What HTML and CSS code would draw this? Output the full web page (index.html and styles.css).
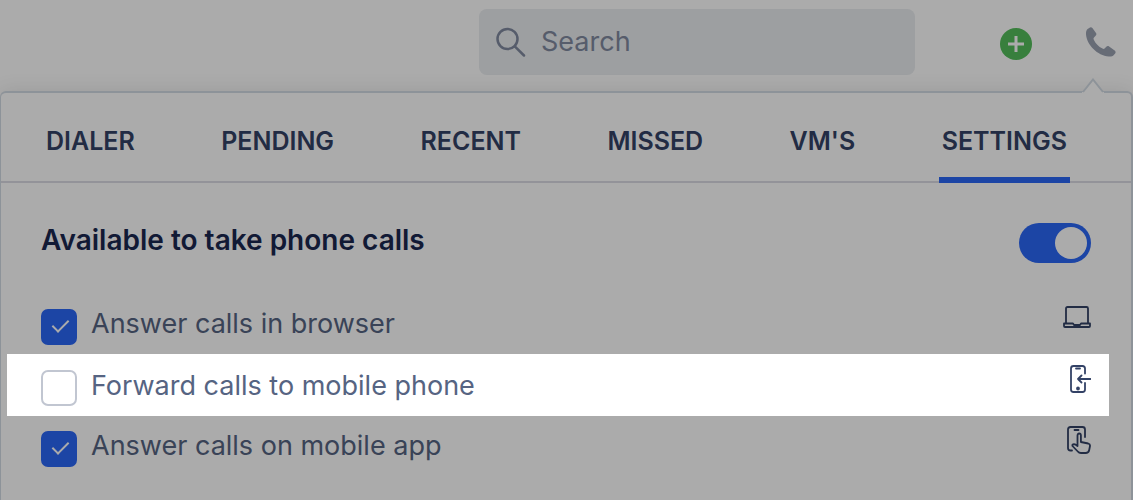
FILE: index.html
```html
<!DOCTYPE html>
<html lang="en">
<head>
    <meta charset="UTF-8">
    <meta name="viewport" content="width=device-width, initial-scale=1.0">
    <title>Phone Settings</title>
    <link rel="stylesheet" href="styles.css">
</head>
<body>
    <!-- Top bar -->
    <header class="topbar">
        <label class="search">
            <svg class="search-icon" viewBox="0 0 30 30" aria-hidden="true">
                <circle cx="11.5" cy="12" r="10"/>
                <path d="M18.8 19.300L28 28.500"/>
            </svg>
            <input type="search" class="search-input" placeholder="Search" aria-label="Search">
        </label>
        <button class="icon-btn add-btn" aria-label="Add">
            <svg viewBox="0 0 32 32" aria-hidden="true">
                <circle cx="16" cy="16" r="16"/>
                <path d="M16 8v16M8 16h16"/>
            </svg>
        </button>
        <button class="icon-btn phone-btn" aria-label="Phone">
            <svg viewBox="0 0 30 30" aria-hidden="true">
                <path d="M3.2.9C4.3.1 5.6.1 6.4 1.1L10 6c.7 1 .4 2-.4 2.8L7.800 10.700c-.4.500-.4 1.200 0 2 1.700 3.800 4.700 6.900 8.700 8.900.8.400 1.600.400 2.100-.2l1.700-1.700c.8-.8 1.900-.9 2.800-.2l5.600 4c1 .8 1.200 2 .4 3l-1.300 1.400c-1 1.100-2.800 1.700-5 1.500C11.500 28.600.8 18 0 7.200-.1 4.800.4 3 1.600 2z"/>
            </svg>
        </button>
    </header>

    <!-- Phone panel -->
    <main class="panel">
        <svg class="panel-arrow" viewBox="0 0 22 16" aria-hidden="true">
            <path d="M0 16V14H1L11 1.500 21 14h1v2z" class="arrow-fill"/>
            <path d="M1 14L11 1.500 21 14" class="arrow-line"/>
        </svg>

        <nav class="tabs">
            <button class="tab">DIALER</button>
            <button class="tab">PENDING</button>
            <button class="tab">RECENT</button>
            <button class="tab">MISSED</button>
            <button class="tab">VM'S</button>
            <button class="tab active">SETTINGS</button>
        </nav>

        <div class="available">
            <label class="available-label" for="available">Available to take phone calls</label>
            <input type="checkbox" class="toggle" id="available" role="switch" checked>
        </div>

        <div class="options">
            <div class="option">
                <input type="checkbox" class="check" id="browser" checked>
                <label class="option-label" for="browser">Answer calls in browser</label>
                <svg class="option-icon" viewBox="0 0 28 28" aria-hidden="true">
                    <path d="M3 19V4.500Q3 3 4.500 3h19Q25 3 25 4.500V19"/>
                    <path d="M1 19.500h9l1 1.500h6l1-1.500h9V22q0 1-1 1H2q-1 0-1-1z"/>
                </svg>
            </div>
            <div class="option highlighted">
                <input type="checkbox" class="check" id="forward">
                <label class="option-label" for="forward">Forward calls to mobile phone</label>
                <svg class="option-icon" viewBox="0 0 28 28" aria-hidden="true">
                    <path d="M22 8.500V3.500Q22 1 19.500 1h-9Q8 1 8 3.500v21Q8 27 10.500 27h9q2.500 0 2.500-2.500V18M13 3.500h4M27.500 14H15M18.500 10.500L15 14l3.500 3.500"/>
                    <circle cx="15" cy="23.500" r="1"/>
                </svg>
            </div>
            <div class="option">
                <input type="checkbox" class="check" id="app" checked>
                <label class="option-label" for="app">Answer calls on mobile app</label>
                <svg class="option-icon" viewBox="0 0 28 28" aria-hidden="true">
                    <path d="M9 24.500H7.500Q5 24.500 5 22V3.500Q5 1 7.500 1h12Q22 1 22 3.500V11M11.500 4h4"/>
                    <path d="M14.500 20V9.500q0-2 1.700-2t1.700 2V16l7.300 1.500q2 .5 1.800 2.500l-.8 4q-.6 3-3.600 3H18q-2 0-3.200-1.500L9.500 20q-.5-1.800 1.500-1.800 1.500.1 3.500 1.800"/>
                </svg>
            </div>
        </div>
    </main>
</body>
</html>
```

FILE: styles.css
```css
* {
    box-sizing: border-box;
}

body {
    margin: 0;
    min-height: 100vh;
    display: flex;
    flex-direction: column;
    overflow: hidden;
    background: white;
    font-family: Inter, "Liberation Sans", sans-serif;
    color: #566482;
}

button {
    padding: 0;
    border: none;
    background: none;
    font: inherit;
    cursor: pointer;
}

/* Top bar */
.topbar {
    display: flex;
    justify-content: flex-end;
    align-items: center;
    padding: 9px 17px 16px;
}

.search {
    flex: 0 1 436px;
    min-width: 0;
    height: 66px;
    display: flex;
    align-items: center;
    gap: 15px;
    padding: 0 17px;
    border-radius: 8px;
    background: #eaedf0;
}

.search-icon {
    flex: none;
    width: 30px;
    height: 30px;
    fill: none;
    stroke: #808aa0;
    stroke-width: 2.5;
    stroke-linecap: round;
}

.search-input {
    flex: 1;
    min-width: 0;
    padding: 0 0 2px;
    border: none;
    outline: none;
    background: none;
    font: inherit;
    font-size: 27px;
}

.search-input::placeholder {
    color: #808aa0;
}

.icon-btn svg {
    display: block;
    width: 100%;
}

.add-btn {
    width: 32px;
    margin: 4px 0 0 85px;
}

.add-btn circle {
    fill: #54be5b;
}

.add-btn path {
    stroke: white;
    stroke-width: 3;
}

.phone-btn {
    width: 30px;
    margin-left: 54px;
    fill: #9aa1b1;
}

/* Panel */
.panel {
    position: relative;
    flex: 1;
    border: 2px solid #d3dbe4;
    border-left-width: 1px;
    border-bottom: none;
    border-radius: 6px 6px 0 0;
    background: white;
    box-shadow: 0 0 20px rgba(0,0,0,0.1);
}

.panel-arrow {
    position: absolute;
    top: -15px;
    right: 27px;
    width: 22px;
    height: 16px;
}

.arrow-fill {
    fill: white;
}

.arrow-line {
    fill: none;
    stroke: #d3dbe4;
    stroke-width: 2;
}

.tabs {
    display: flex;
    justify-content: space-between;
    padding: 0 61px 0 42px;
    border-bottom: 2px solid #dcdce5;
}

.tab {
    height: 90px;
    padding: 12px 3px 0;
    margin-bottom: -2px;
    border-bottom: 6px solid transparent;
    color: #334266;
    font-size: 25px;
    font-weight: 600;
}

.tab.active {
    border-color: #2b67f7;
}

/* Availability */
.available {
    display: flex;
    justify-content: space-between;
    align-items: center;
    padding: 40px 40px 30px;
}

.available-label {
    color: #1a2750;
    font-size: 28px;
    font-weight: 600;
    line-height: 34px;
    padding-bottom: 6px;
}

.toggle {
    appearance: none;
    display: flex;
    justify-content: flex-end;
    width: 72px;
    height: 40px;
    margin: 0;
    padding: 4px;
    border-radius: 20px;
    background: #2b67f7;
}

.toggle::after {
    content: "";
    width: 32px;
    height: 32px;
    border-radius: 50%;
    background: white;
}

.toggle:not(:checked) {
    justify-content: flex-start;
    background: #c2c8d2;
}

/* Options */
.options {
    margin: 0 22px 0 6px;
}

.option {
    display: flex;
    align-items: center;
    height: 61px;
    padding: 0 18px 0 34px;
}

/* spotlight: everything around the row is dimmed */
.highlighted {
    position: relative;
    z-index: 1;
    height: 62px;
    margin-bottom: -1px;
    box-shadow: 0 0 0 2000px rgba(0,0,0,0.33);
}

.check {
    appearance: none;
    flex: none;
    display: flex;
    justify-content: center;
    align-items: center;
    width: 36px;
    height: 36px;
    margin: 6px 14px 0 0;
    border: 2px solid #c1c6d1;
    border-radius: 7px;
}

.check:checked {
    border-color: #2b67f7;
    background: #2b67f7;
}

.check:checked::after {
    content: "";
    width: 7px;
    height: 14px;
    margin: 0 0 5px 2px;
    border: solid white;
    border-width: 0 2px 2px 0;
    transform: rotate(45deg);
}

.option-label {
    flex: 1;
    font-size: 27px;
}

.option-icon {
    width: 28px;
    height: 28px;
    margin-bottom: 12px;
    fill: none;
    stroke: #334266;
    stroke-width: 1.8;
    stroke-linecap: round;
    stroke-linejoin: round;
}
```
